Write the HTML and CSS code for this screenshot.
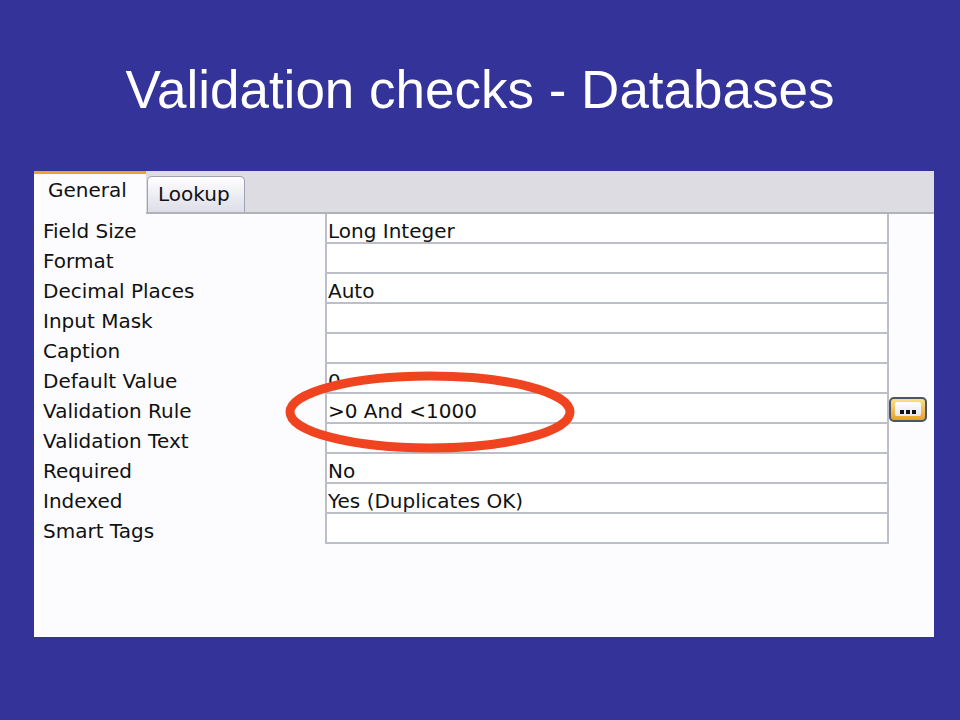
FILE: index.html
```html
<!DOCTYPE html>
<html>
<head>
<meta charset="utf-8">
<link rel="stylesheet" href="styles.css">
</head>
<body>
<div class="slide">
  <h1 class="slide-title">Validation checks - Databases</h1>
  <div class="panel">
    <div class="tabstrip">
      <div class="tab tab-active">General</div>
      <div class="tab tab-inactive">Lookup</div>
    </div>
    <div class="grid">
      <div class="row"><div class="label">Field Size</div><div class="value">Long Integer</div></div>
      <div class="row"><div class="label">Format</div><div class="value"></div></div>
      <div class="row"><div class="label">Decimal Places</div><div class="value">Auto</div></div>
      <div class="row"><div class="label">Input Mask</div><div class="value"></div></div>
      <div class="row"><div class="label">Caption</div><div class="value"></div></div>
      <div class="row"><div class="label">Default Value</div><div class="value">0</div></div>
      <div class="row"><div class="label">Validation Rule</div><div class="value">&gt;0 And &lt;1000</div></div>
      <div class="row"><div class="label">Validation Text</div><div class="value"></div></div>
      <div class="row"><div class="label">Required</div><div class="value">No</div></div>
      <div class="row"><div class="label">Indexed</div><div class="value">Yes (Duplicates OK)</div></div>
      <div class="row"><div class="label">Smart Tags</div><div class="value"></div></div>
    </div>
    <div class="builder-btn">
      <div class="builder-inner">
        <svg width="16" height="4" viewBox="0 0 16 4"><rect x="0" y="0" width="4" height="4" fill="#111"/><rect x="6" y="0" width="4" height="4" fill="#111"/><rect x="12" y="0" width="4" height="4" fill="#111"/></svg>
      </div>
    </div>
    <svg class="highlight" width="300" height="90" viewBox="0 0 300 90">
      <ellipse cx="148" cy="43" rx="140" ry="36" fill="none" stroke="#f04420" stroke-width="9"/>
    </svg>
  </div>
</div>
</body>
</html>
```
FILE: styles.css
```css
html, body {
  margin: 0;
  padding: 0;
}
body {
  background: #333399;
  width: 960px;
  height: 720px;
  overflow: hidden;
}
.slide {
  width: 960px;
  height: 720px;
}
.slide-title {
  margin: 0;
  padding-top: 60px;
  height: 111px;
  box-sizing: content-box;
  font-family: "Liberation Sans", Arial, sans-serif;
  font-weight: normal;
  font-size: 53px;
  line-height: 60px;
  color: #ffffff;
  text-align: center;
}
.panel {
  position: relative;
  margin-left: 34px;
  width: 900px;
  height: 466px;
  background: #fcfcfe;
  font-family: "DejaVu Sans", Verdana, sans-serif;
  font-size: 20px;
  color: #111111;
}
.tabstrip {
  display: flex;
  align-items: flex-end;
  height: 41px;
  background: #dcdce2;
  border-bottom: 2px solid #b0b2ba;
}
.tab {
  box-sizing: border-box;
}
.tab-active {
  width: 112px;
  height: 43px;
  margin-bottom: -2px;
  background: #fcfcfe;
  border-top: 3px solid #f0a030;
  padding-left: 14px;
  padding-top: 4px;
  line-height: 24px;
}
.tab-inactive {
  width: 98px;
  height: 36px;
  margin-left: 1px;
  background: linear-gradient(#ffffff, #dcdde8);
  border: 1px solid #9ea2b4;
  border-bottom: none;
  border-radius: 5px 5px 0 0;
  padding-left: 10px;
  padding-top: 5px;
  line-height: 24px;
}
.grid {
  display: flex;
  flex-direction: column;
}
.row {
  display: flex;
  height: 30px;
}
.label {
  width: 291px;
  box-sizing: border-box;
  padding-left: 9px;
  padding-top: 6px;
  line-height: 22px;
  white-space: nowrap;
}
.value {
  width: 564px;
  box-sizing: border-box;
  border-left: 2px solid #bcbfc7;
  border-right: 2px solid #bcbfc7;
  border-bottom: 2px solid #bcbfc7;
  padding-left: 1px;
  padding-top: 6px;
  line-height: 22px;
  white-space: nowrap;
  background: #ffffff;
}
.builder-btn {
  position: absolute;
  left: 855px;
  top: 226px;
  width: 38px;
  height: 25px;
  box-sizing: border-box;
  border: 2px solid #4c5468;
  border-radius: 5px;
  background: linear-gradient(#fbe08a, #e8a126);
  padding: 3px 4px 4px 4px;
}
.builder-inner {
  height: 100%;
  background: linear-gradient(#ffffff, #e6e8f2);
  border-radius: 2px;
  display: flex;
  justify-content: center;
  align-items: flex-end;
  padding-bottom: 2px;
  box-sizing: border-box;
}
.builder-inner svg {
  display: block;
}
.highlight {
  position: absolute;
  left: 248px;
  top: 198px;
}
```
